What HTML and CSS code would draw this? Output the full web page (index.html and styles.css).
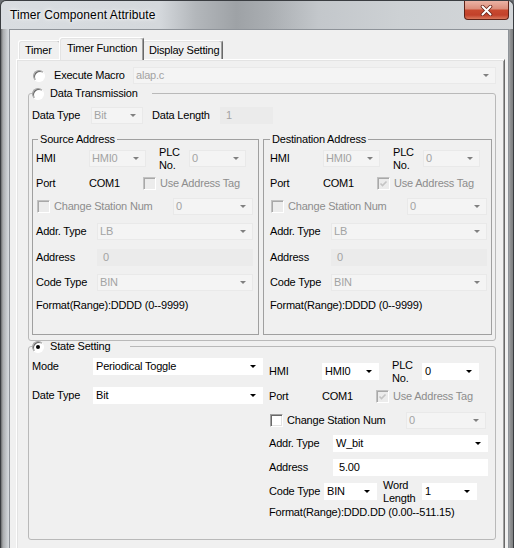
FILE: index.html
```html
<!DOCTYPE html>
<html>
<head>
<meta charset="utf-8">
<title>Timer Component Attribute</title>
<link rel="stylesheet" href="styles.css">
</head>
<body>
<div class="window">
  <div class="titlebar">
    <span class="title">Timer Component Attribute</span>
    <div class="close">
      <svg width="13" height="11" viewBox="0 0 13 11"><path d="M2.5 1.5 L10.5 9.5 M10.5 1.5 L2.5 9.5" stroke="#6a2317" stroke-width="3.6" stroke-linecap="round"/><path d="M2.5 1.5 L10.5 9.5 M10.5 1.5 L2.5 9.5" stroke="#ffffff" stroke-width="2" stroke-linecap="round"/></svg>
    </div>
  </div>
  <div class="frame">
    <div class="client">
      <div class="tabs">
        <div class="tab tab-timer">Timer</div>
        <div class="tab active">Timer Function</div>
        <div class="tab tab-display">Display Setting</div>
      </div>
      <div class="panel">
        <div class="macro">
          <span class="radio"></span>
          <span class="macro-label">Execute Macro</span>
          <div class="combo dis wide">alap.c<i class="arr"></i></div>
        </div>

        <fieldset class="group data">
          <legend class="glegend data-legend"><span class="radio"></span>Data Transmission</legend>
          <div class="dt-row">
            <span class="dt-label">Data Type</span>
            <div class="combo dis c-bit">Bit<i class="arr"></i></div>
            <span class="dl-label">Data Length</span>
            <div class="edit dis c-len1">1</div>
          </div>
          <div class="pair">
            <fieldset class="box src">
              <legend class="blegend">Source Address</legend>
              <div class="addr">
                <div class="row ra">
                  <span class="l-hmi">HMI</span>
                  <div class="combo dis c-hmi">HMI0<i class="arr"></i></div>
                  <span class="l-plc">PLC<br>No.</span>
                  <div class="combo dis c-plc">0<i class="arr"></i></div>
                </div>
                <div class="row rb">
                  <span class="l-port">Port</span>
                  <span class="com">COM1</span>
                  <span class="chk dis"></span>
                  <span class="gray l-tag">Use Address Tag</span>
                </div>
                <div class="row rc">
                  <span class="chk dis c-first"></span>
                  <span class="gray l-chg">Change Station Num</span>
                  <div class="combo dis c-stn">0<i class="arr"></i></div>
                </div>
                <div class="row rd">
                  <span class="l-field">Addr. Type</span>
                  <div class="combo dis grow">LB<i class="arr"></i></div>
                </div>
                <div class="row re">
                  <span class="l-field">Address</span>
                  <div class="edit dis grow">0</div>
                </div>
                <div class="row rf">
                  <span class="l-field">Code Type</span>
                  <div class="combo dis grow">BIN<i class="arr"></i></div>
                </div>
                <div class="row rg">Format(Range):DDDD (0--9999)</div>
              </div>
            </fieldset>
            <fieldset class="box dst">
              <legend class="blegend">Destination Address</legend>
              <div class="addr">
                <div class="row ra">
                  <span class="l-hmi">HMI</span>
                  <div class="combo dis c-hmi">HMI0<i class="arr"></i></div>
                  <span class="l-plc">PLC<br>No.</span>
                  <div class="combo dis c-plc">0<i class="arr"></i></div>
                </div>
                <div class="row rb">
                  <span class="l-port">Port</span>
                  <span class="com">COM1</span>
                  <span class="chk dis checked"><svg width="9" height="9" viewBox="0 0 9 9"><path d="M1.5 4.5 L3.5 6.5 L7.5 2.5" fill="none" stroke="#c4c4c4" stroke-width="1.6"/></svg></span>
                  <span class="gray l-tag">Use Address Tag</span>
                </div>
                <div class="row rc">
                  <span class="chk dis c-first"></span>
                  <span class="gray l-chg">Change Station Num</span>
                  <div class="combo dis c-stn">0<i class="arr"></i></div>
                </div>
                <div class="row rd">
                  <span class="l-field">Addr. Type</span>
                  <div class="combo dis grow">LB<i class="arr"></i></div>
                </div>
                <div class="row re">
                  <span class="l-field">Address</span>
                  <div class="edit dis grow">0</div>
                </div>
                <div class="row rf">
                  <span class="l-field">Code Type</span>
                  <div class="combo dis grow">BIN<i class="arr"></i></div>
                </div>
                <div class="row rg">Format(Range):DDDD (0--9999)</div>
              </div>
            </fieldset>
          </div>
        </fieldset>

        <fieldset class="group state">
          <legend class="glegend state-legend"><span class="radio checked"></span>State Setting</legend>
          <div class="state-body">
            <div class="st-left">
              <div class="srow">
                <span class="s-label">Mode</span>
                <div class="combo en s-combo">Periodical Toggle<i class="arr"></i></div>
              </div>
              <div class="srow srow2">
                <span class="s-label">Date Type</span>
                <div class="combo en s-combo">Bit<i class="arr"></i></div>
              </div>
            </div>
            <div class="addr st-right">
              <div class="row ra">
                <span class="l-hmi">HMI</span>
                <div class="combo en c-hmi">HMI0<i class="arr"></i></div>
                <span class="l-plc">PLC<br>No.</span>
                <div class="combo en c-plc">0<i class="arr"></i></div>
              </div>
              <div class="row rb">
                <span class="l-port">Port</span>
                <span class="com">COM1</span>
                <span class="chk dis checked"><svg width="9" height="9" viewBox="0 0 9 9"><path d="M1.5 4.5 L3.5 6.5 L7.5 2.5" fill="none" stroke="#c4c4c4" stroke-width="1.6"/></svg></span>
                <span class="gray l-tag">Use Address Tag</span>
              </div>
              <div class="row rc">
                <span class="chk c-first"></span>
                <span class="l-chg">Change Station Num</span>
                <div class="combo dis c-stn">0<i class="arr"></i></div>
              </div>
              <div class="row rd">
                <span class="l-field l-wide">Addr. Type</span>
                <div class="combo en grow">W_bit<i class="arr"></i></div>
              </div>
              <div class="row re">
                <span class="l-field l-wide">Address</span>
                <div class="edit en grow">5.00</div>
              </div>
              <div class="row rf">
                <span class="l-code">Code Type</span>
                <div class="combo en c-bin">BIN<i class="arr"></i></div>
                <span class="l-word">Word<br>Length</span>
                <div class="combo en c-wlen">1<i class="arr"></i></div>
              </div>
              <div class="row rg">Format(Range):DDD.DD (0.00--511.15)</div>
            </div>
          </div>
        </fieldset>
      </div>
    </div>
  </div>
</div>
</body>
</html>
```

FILE: styles.css
```css
* { box-sizing: border-box; }
html, body { margin: 0; padding: 0; }
body {
  width: 514px;
  height: 548px;
  overflow: hidden;
  background: #6c7075;
  font-family: "Liberation Sans", Arial, sans-serif;
  font-size: 11px;
  letter-spacing: -0.2px;
  line-height: 13px;
  color: #000;
}

/* window chrome */
.window {
  width: 514px;
  height: 548px;
  display: flex;
  flex-direction: column;
  border: 1px solid #3a3d41;
  border-bottom: none;
  border-radius: 6px 6px 0 0;
  background: linear-gradient(90deg, #d9dde1 0%, #d4d8dc 31%, #b3b7bb 38%, #9ea2a6 46%, #a9adb1 52%, #c3c7cb 62%, #cdd1d4 78%, #d3d6d9 100%);
  overflow: hidden;
}
.titlebar {
  height: 28px;
  flex: none;
  display: flex;
  align-items: flex-start;
  justify-content: space-between;
  padding-left: 9px;
}
.title {
  font-size: 12px;
  letter-spacing: 0.1px;
  line-height: 15px;
  margin-top: 7px;
  text-shadow: 0 0 6px #fff, 0 0 3px #fff;
}
.close {
  width: 45px;
  height: 19px;
  margin-right: 4px;
  border: 1px solid #5e2318;
  border-top: none;
  border-radius: 0 0 4px 4px;
  background: linear-gradient(#ebb3a5 0%, #dc8f7c 42%, #c8492f 52%, #c2412a 78%, #d9785c 100%);
  display: flex;
  align-items: center;
  justify-content: center;
}
.frame {
  flex: 1;
  min-height: 0;
  display: flex;
  padding: 0 5px 0 8px;
  background: linear-gradient(90deg, rgba(30,30,30,.6) 0, rgba(80,80,80,.35) 2px, rgba(255,255,255,0) 8px, rgba(255,255,255,0) calc(100% - 6px), rgba(70,70,70,.45) calc(100% - 3px), rgba(40,40,40,.5) 100%);
}
.client {
  flex: 1;
  display: flex;
  flex-direction: column;
  background: #f0f0f0;
  border: 1px solid #8e9399;
  border-bottom: none;
  padding: 7px 3px 0 6px;
}

/* tabs */
.tabs {
  display: flex;
  align-items: flex-end;
  height: 22px;
  flex: none;
  padding-left: 2px;
}
.tab {
  height: 19px;
  border: 1px solid;
  border-color: #fff #696969 transparent #fff;
  border-bottom: none;
  border-radius: 3px 3px 0 0;
  box-shadow: inset -1px 0 0 #a0a0a0, inset 1px 1px 0 #e3e3e3;
  padding: 3px 0 0 6px;
  background: #f0f0f0;
  white-space: nowrap;
}
.tab-timer { width: 43px; }
.tab-display { width: 81px; }
.tab.active {
  width: 85px;
  height: 23px;
  margin: 0 -2px -1px;
  padding: 4px 0 0 7px;
  position: relative;
  z-index: 1;
}

/* panel */
.panel {
  flex: 1;
  border: 1px solid;
  border-color: #fff #696969 #696969 #fff;
  border-bottom: none;
  box-shadow: inset 1px 1px 0 #e3e3e3, inset -1px 0 0 #a0a0a0;
  background: #f0f0f0;
  padding: 7px 8px 0 11px;
}

/* generic controls */
.radio {
  width: 12px;
  height: 12px;
  flex: none;
  border-radius: 50%;
  border: 1px solid;
  border-color: #a0a0a0 #fff #fff #a0a0a0;
  background: #fff;
  box-shadow: inset 1px 1px 0 #696969;
}
.radio.checked::after {
  content: "";
  display: block;
  width: 4px;
  height: 4px;
  margin: 3px;
  border-radius: 50%;
  background: #000;
}
.chk {
  width: 13px;
  height: 13px;
  flex: none;
  border: 1px solid;
  border-color: #a0a0a0 #fff #fff #a0a0a0;
  box-shadow: inset 1px 1px 0 #696969, inset -1px -1px 0 #e3e3e3;
  background: #fff;
  display: flex;
  align-items: center;
  justify-content: center;
}
.chk.dis {
  border-color: #c2c2c2 #fff #fff #c2c2c2;
  box-shadow: inset 1px 1px 0 #a8a8a8;
  background: #ececec;
}
.combo {
  height: 17px;
  flex: none;
  display: flex;
  align-items: center;
  justify-content: space-between;
  padding: 0 7px 0 3px;
  white-space: nowrap;
}
.combo.dis {
  background: #f4f4f4;
  color: #a3a3a3;
  box-shadow: inset 0 0 0 1px #e9e9e9;
}
.combo.en { background: #fff; }
.arr {
  width: 0;
  height: 0;
  border-left: 3px solid transparent;
  border-right: 3px solid transparent;
  border-top: 3px solid #000;
}
.combo.dis .arr { border-top-color: #808080; }
.edit {
  height: 17px;
  flex: none;
  display: flex;
  align-items: center;
  padding-left: 6px;
}
.edit.dis { background: #ebebeb; color: #a3a3a3; }
.edit.en { background: #fff; }
.gray { color: #8d8d8d; }

/* execute macro row */
.macro {
  display: flex;
  align-items: center;
  height: 17px;
}
.macro .radio { margin-left: 5px; }
.macro-label { margin-left: 9px; width: 79px; }
.combo.wide { flex: 1; }

/* group boxes */
.group {
  margin: 3px 0 0;
  padding: 0 3px 5px 3px;
  border: 1px solid #b9b9b9;
  border-radius: 3px;
  min-width: 0;
}
.glegend {
  display: flex;
  align-items: center;
  height: 13px;
  padding: 0;
  white-space: nowrap;
}
.glegend .radio { margin-right: 6px; }
.data-legend { padding-right: 14px; }
.state-legend { padding-right: 20px; }

.dt-row {
  display: flex;
  align-items: center;
  height: 17px;
  margin-top: 7px;
}
.dt-label { width: 59px; }
.c-bit { width: 52px; }
.dl-label { margin-left: 9px; width: 68px; }
.c-len1 { width: 53px; }

.pair {
  display: flex;
  gap: 4px;
  margin-top: 9px;
}
.box {
  flex: 1;
  min-width: 0;
  margin: 0;
  border: 1px solid #a0a0a0;
  padding: 0 5px 18px 3px;
}
.box.dst { padding: 0 4px 18px 6px; }
.blegend {
  padding: 0 2px;
  margin-left: 2px;
  height: 13px;
  white-space: nowrap;
}
.dst .blegend { margin-left: 0; }

/* address block */
.addr {
  display: flex;
  flex-direction: column;
}
.row {
  display: flex;
  align-items: center;
  flex: none;
  white-space: nowrap;
}
.ra { height: 25px; }
.rb { height: 24px; }
.rc { height: 23px; }
.rd { height: 27px; }
.re { height: 25px; }
.rf { height: 25px; }
.rg { height: 21px; }
.l-hmi { width: 53px; }
.c-hmi { width: 57px; }
.l-plc { margin-left: 13px; width: 30px; }
.c-plc { width: 57px; }
.l-port { width: 53px; }
.com { width: 54px; }
.rb .chk { margin-right: 4px; }
.c-first { margin-left: 1px; }
.l-chg { margin-left: 4px; width: 119px; }
.c-stn { width: 80px; }
.l-field { width: 61px; flex: none; }
.grow { flex: 1; }

/* state setting */
.state { margin-top: -1px; padding-bottom: 0; }
.state-body { display: flex; }
.st-left { width: 231px; padding-top: 5px; }
.srow { display: flex; align-items: center; height: 17px; }
.srow2 { margin-top: 12px; }
.s-label { width: 61px; }
.s-combo { width: 170px; }
.st-right {
  width: 219px;
  margin-left: 6px;
  padding-top: 6px;
  padding-bottom: 18px;
}
.st-right .ra { height: 25px; }
.st-right .rb { height: 25px; }
.st-right .rc { height: 23px; }
.st-right .rd { height: 23px; }
.st-right .re { height: 24px; }
.st-right .rf { height: 25px; }
.st-right .rg { height: 17px; }
.l-wide { width: 64px; }
.l-code { width: 55px; }
.c-bin { width: 53px; }
.l-word { margin-left: 6px; width: 39px; }
.c-wlen { width: 55px; }
```
